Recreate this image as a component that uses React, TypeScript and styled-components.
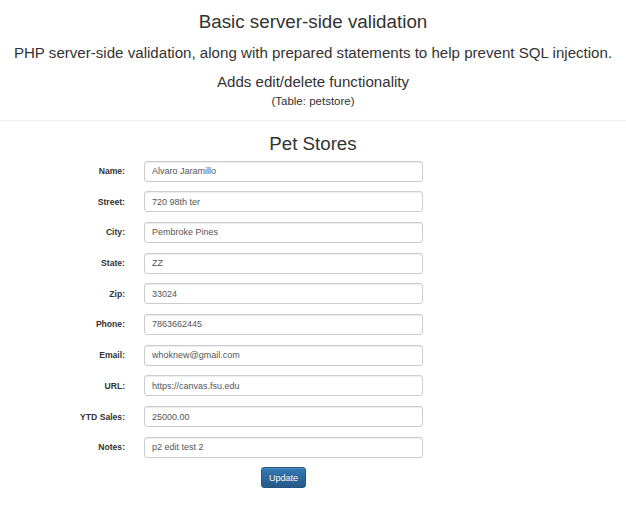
import React from 'react';
import styled, { createGlobalStyle } from 'styled-components';

const GlobalStyle = createGlobalStyle`
  html, body {
    margin: 0;
    padding: 0;
    background: #fff;
  }
  body {
    font-family: "Liberation Sans", Arial, Helvetica, sans-serif;
    color: #333;
  }
`;

interface Field {
  label: string;
  value: string;
}

const fields: Field[] = [
  { label: 'Name:', value: 'Alvaro Jaramillo' },
  { label: 'Street:', value: '720 98th ter' },
  { label: 'City:', value: 'Pembroke Pines' },
  { label: 'State:', value: 'ZZ' },
  { label: 'Zip:', value: '33024' },
  { label: 'Phone:', value: '7863662445' },
  { label: 'Email:', value: 'whoknew@gmail.com' },
  { label: 'URL:', value: 'https://canvas.fsu.edu' },
  { label: 'YTD Sales:', value: '25000.00' },
  { label: 'Notes:', value: 'p2 edit test 2' },
];

const Page = styled.div`
  width: 626px;
`;

const Header = styled.header`
  text-align: center;
  padding: 11px 0 11.5px;
  border-bottom: 1px solid #eee;
`;

const Title = styled.h1`
  margin: 0;
  font-size: 18.8px;
  font-weight: 400;
  line-height: 22px;
`;

const Lead = styled.p`
  margin: 11px 0 0;
  font-size: 15.1px;
  line-height: 18px;
  white-space: nowrap;
`;

const Small = styled.p`
  margin: 2.5px 0 0;
  font-size: 11.5px;
  line-height: 15px;
`;

const Main = styled.main`
  padding-top: 12px;
`;

const FormTitle = styled.h2`
  margin: 0 0 5.5px;
  text-align: center;
  font-size: 18.7px;
  font-weight: 400;
  line-height: 22px;
`;

const Form = styled.form`
  display: flex;
  flex-direction: column;
  gap: 9.7px;
`;

const Row = styled.div`
  display: flex;
  align-items: center;
`;

const Label = styled.label`
  width: 125px;
  text-align: right;
  font-size: 8.6px;
  font-weight: 700;
  padding-right: 19px;
  box-sizing: content-box;
`;

const Input = styled.input`
  width: 279px;
  height: 21px;
  box-sizing: border-box;
  padding: 0 7px;
  font-family: inherit;
  font-size: 9px;
  color: #555;
  background: #fff;
  border: 1px solid #ccc;
  border-radius: 3px;
  box-shadow: inset 0 1px 1px rgba(0, 0, 0, 0.075);
  outline: none;
`;

const Actions = styled.div`
  display: flex;
  justify-content: center;
  margin-left: 144px;
  width: 279px;
`;

const Button = styled.button`
  height: 21px;
  padding: 0 7px;
  font-family: inherit;
  font-size: 9px;
  color: #fff;
  background: linear-gradient(to bottom, #337ab7 0%, #265a88 100%);
  border: 1px solid #245580;
  border-radius: 3px;
  box-shadow: inset 0 1px 0 rgba(255, 255, 255, 0.15), 0 1px 1px rgba(0, 0, 0, 0.075);
  text-shadow: 0 -1px 0 rgba(0, 0, 0, 0.2);
  cursor: pointer;
`;

export default function App() {
  return (
    <Page>
      <GlobalStyle />
      <Header>
        <Title>Basic server-side validation</Title>
        <Lead>PHP server-side validation, along with prepared statements to help prevent SQL injection.</Lead>
        <Lead>Adds edit/delete functionality</Lead>
        <Small>(Table: petstore)</Small>
      </Header>
      <Main>
        <FormTitle>Pet Stores</FormTitle>
        <Form onSubmit={e => e.preventDefault()}>
          {fields.map(f => (
            <Row key={f.label}>
              <Label>{f.label}</Label>
              <Input defaultValue={f.value} />
            </Row>
          ))}
          <Actions>
            <Button type="submit">Update</Button>
          </Actions>
        </Form>
      </Main>
    </Page>
  );
}
